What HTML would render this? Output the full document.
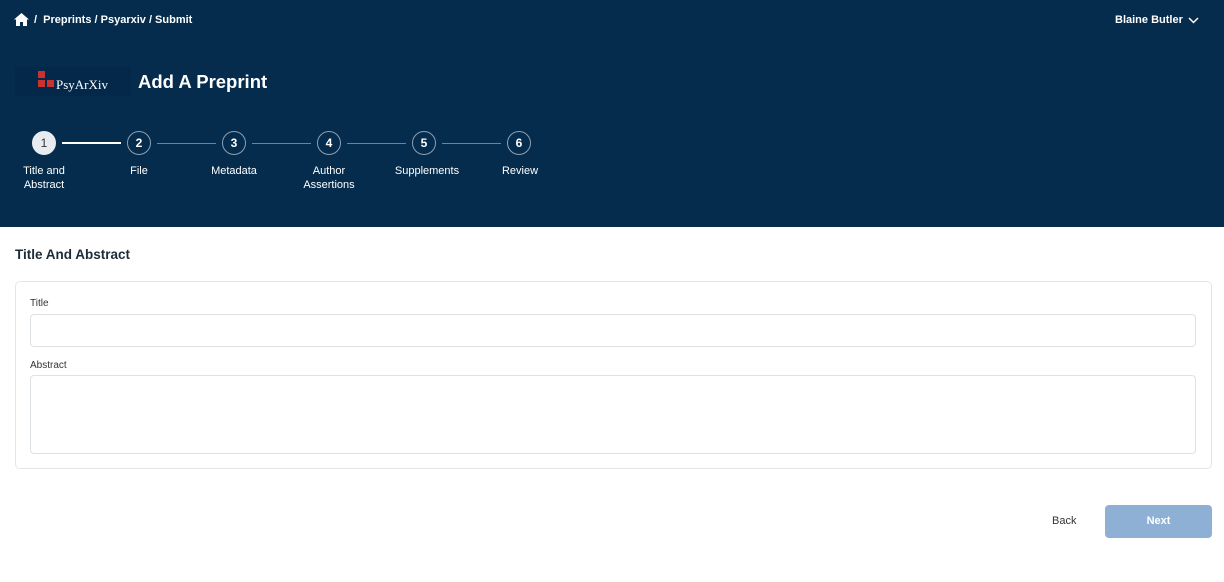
<!DOCTYPE html>
<html><head><style>
*{box-sizing:border-box;margin:0;padding:0}
body{width:1224px;height:582px;background:#fff;font-family:"Liberation Sans",sans-serif;position:relative;overflow:hidden}
.hdr{position:absolute;left:0;top:0;width:1224px;height:227px;background:#052c4c}
.t{position:absolute;color:#fff;white-space:nowrap}
.c{position:absolute;width:24px;height:24px;border-radius:50%;border:1px solid #8da0b3;color:#fff;font-size:12px;font-weight:bold;text-align:center;line-height:22px;top:131px}
.c.a{background:#e7ecf1;color:#333;border-color:#e7ecf1;font-weight:normal}
.ln{position:absolute;top:143px;height:1px;background:#6f8396}
.lb{position:absolute;color:#fff;font-size:11px;text-align:center;width:100px;line-height:14px;top:164px}
.lbl{position:absolute;font-size:10px;color:#333}
.inp{position:absolute;border:1px solid #dde2e6;border-radius:4px;background:#fff}
</style></head><body>
<div class="hdr"></div>
<svg style="position:absolute;left:14px;top:13px" width="15" height="13" viewBox="0 0 15 13"><path d="M7.5 0L0 6.5h2V13h4V9h3v4h4V6.5h2z" fill="#fff"/></svg>
<div class="t" style="left:34px;top:14px;font-size:11px;font-weight:bold">/&nbsp; Preprints / Psyarxiv / Submit</div>
<div class="t" style="left:1115px;top:14px;font-size:11px;font-weight:bold">Blaine Butler</div>
<svg style="position:absolute;left:1188px;top:17px" width="11" height="7"><path d="M1 1l4.5 4.5L10 1" stroke="#fff" stroke-width="1.5" fill="none"/></svg>
<div style="position:absolute;left:15px;top:67px;width:116px;height:29px;background:#04284a"></div>
<div style="position:absolute;left:38px;top:71px;width:7px;height:7px;background:#c9322f"></div>
<div style="position:absolute;left:38px;top:80px;width:7px;height:7px;background:#c9322f"></div>
<div style="position:absolute;left:47px;top:80px;width:7px;height:7px;background:#c9322f"></div>
<div class="t" style="left:56px;top:77px;font-family:'Liberation Serif',serif;font-size:13px">PsyArXiv</div>
<div class="t" style="left:138px;top:71px;font-size:18.5px;font-weight:bold">Add A Preprint</div>
<div class="ln" style="left:62px;width:59px;height:2px;top:142px;background:#fff"></div>
<div class="ln" style="left:157px;width:59px"></div>
<div class="ln" style="left:252px;width:59px"></div>
<div class="ln" style="left:347px;width:59px"></div>
<div class="ln" style="left:442px;width:59px"></div>
<div class="c a" style="left:32px">1</div>
<div class="c" style="left:127px">2</div>
<div class="c" style="left:222px">3</div>
<div class="c" style="left:317px">4</div>
<div class="c" style="left:412px">5</div>
<div class="c" style="left:507px">6</div>
<div class="lb" style="left:-6px">Title and<br>Abstract</div>
<div class="lb" style="left:89px">File</div>
<div class="lb" style="left:184px">Metadata</div>
<div class="lb" style="left:279px">Author<br>Assertions</div>
<div class="lb" style="left:377px">Supplements</div>
<div class="lb" style="left:470px">Review</div>
<div style="position:absolute;left:15px;top:247px;font-size:13.5px;font-weight:bold;color:#1d2b38">Title And Abstract</div>
<div style="position:absolute;left:15px;top:281px;width:1197px;height:188px;border:1px solid #e3e6e9;border-radius:5px"></div>
<div class="lbl" style="left:30px;top:298px">Title</div>
<div class="inp" style="left:30px;top:314px;width:1166px;height:33px"></div>
<div class="lbl" style="left:30px;top:360px">Abstract</div>
<div class="inp" style="left:30px;top:375px;width:1166px;height:79px"></div>
<div style="position:absolute;left:1052px;top:515px;font-size:11px;color:#333">Back</div>
<div style="position:absolute;left:1105px;top:505px;width:107px;height:33px;background:#8fb0d5;border-radius:4px;color:#fff;font-size:11px;font-weight:bold;text-align:center;line-height:33px">Next</div>
</body></html>
